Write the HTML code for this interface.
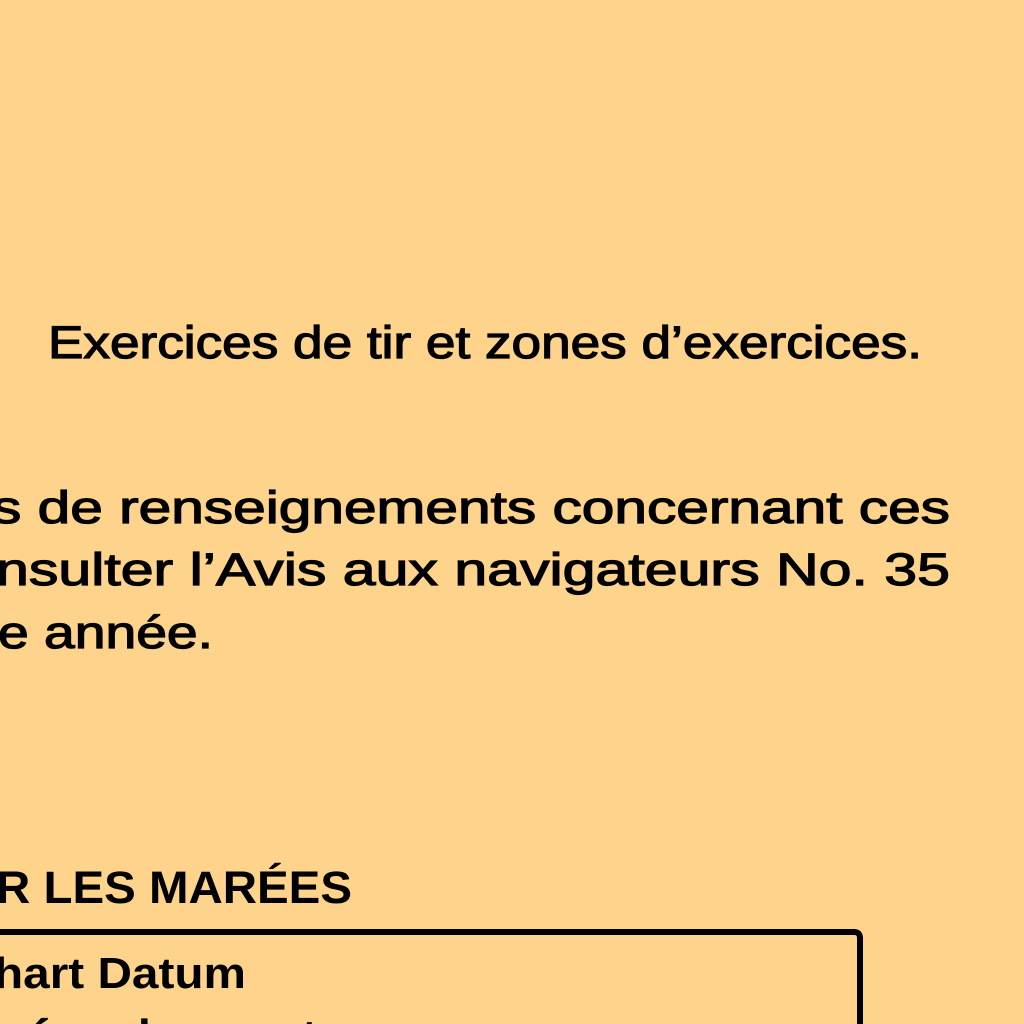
<!DOCTYPE html>
<html><head><meta charset="utf-8"><style>
html,body{margin:0;padding:0;background:#FED48C;width:1024px;height:1024px;overflow:hidden}
svg{display:block}
text{font-family:"Liberation Sans",Arial,sans-serif;fill:#000}
.r{stroke:#000;stroke-width:1.2}
</style></head><body>
<svg width="1024" height="1024" viewBox="0 0 1024 1024">
<rect width="1024" height="1024" fill="#FED48C"/>
<text class="r" x="48" y="358" font-size="45" textLength="874" lengthAdjust="spacingAndGlyphs">Exercices de tir et zones d’exercices.</text>
<text class="r" x="-8" y="523" font-size="45" textLength="958" lengthAdjust="spacingAndGlyphs">s de renseignements concernant ces</text>
<text class="r" x="-4" y="585" font-size="45" textLength="954" lengthAdjust="spacingAndGlyphs">nsulter l’Avis aux navigateurs No. 35</text>
<text class="r" x="-2" y="648" font-size="45" textLength="215" lengthAdjust="spacingAndGlyphs">e année.</text>
<text x="-4" y="903" font-size="45" font-weight="bold" textLength="356" lengthAdjust="spacingAndGlyphs">R LES MARÉES</text>
<path d="M-10 932 H854 Q860 932 860 938 V1030" fill="none" stroke="#000" stroke-width="6"/>
<text x="-6" y="988" font-size="44" font-weight="bold" textLength="252" lengthAdjust="spacingAndGlyphs">hart Datum</text>
<text class="r" x="-4" y="1052" font-size="45" textLength="380" lengthAdjust="spacingAndGlyphs">zéro des cartes</text>
</svg>
</body></html>
